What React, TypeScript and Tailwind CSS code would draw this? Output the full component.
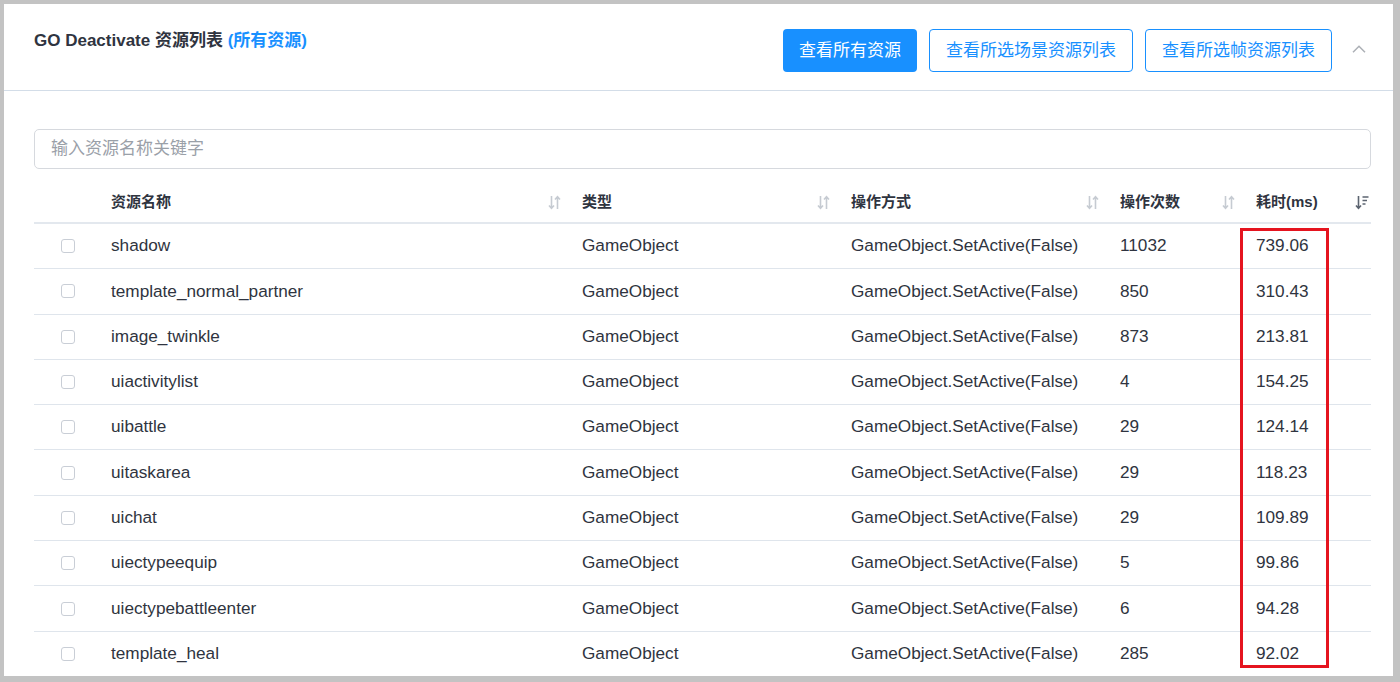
type Row = {
  name: string
  type: string
  op: string
  count: string
  time: string
}

const rows: Row[] = [
  { name: 'shadow', type: 'GameObject', op: 'GameObject.SetActive(False)', count: '11032', time: '739.06' },
  { name: 'template_normal_partner', type: 'GameObject', op: 'GameObject.SetActive(False)', count: '850', time: '310.43' },
  { name: 'image_twinkle', type: 'GameObject', op: 'GameObject.SetActive(False)', count: '873', time: '213.81' },
  { name: 'uiactivitylist', type: 'GameObject', op: 'GameObject.SetActive(False)', count: '4', time: '154.25' },
  { name: 'uibattle', type: 'GameObject', op: 'GameObject.SetActive(False)', count: '29', time: '124.14' },
  { name: 'uitaskarea', type: 'GameObject', op: 'GameObject.SetActive(False)', count: '29', time: '118.23' },
  { name: 'uichat', type: 'GameObject', op: 'GameObject.SetActive(False)', count: '29', time: '109.89' },
  { name: 'uiectypeequip', type: 'GameObject', op: 'GameObject.SetActive(False)', count: '5', time: '99.86' },
  { name: 'uiectypebattleenter', type: 'GameObject', op: 'GameObject.SetActive(False)', count: '6', time: '94.28' },
  { name: 'template_heal', type: 'GameObject', op: 'GameObject.SetActive(False)', count: '285', time: '92.02' },
]

const SortIcon = () => (
  <svg width="13" height="15" viewBox="0 0 13 15" fill="none" stroke="#c6cbd2" strokeWidth="1.6">
    <path d="M3.5 1v12M1 10.5l2.5 2.7 2.5-2.7" />
    <path d="M9.5 14V2M7 4.5l2.5-2.7 2.5 2.7" />
  </svg>
)

const SortDescIcon = () => (
  <svg width="14" height="15" viewBox="0 0 14 15" fill="none" stroke="#5c6470" strokeWidth="1.6">
    <path d="M3.5 1v12M1 10.5l2.5 2.7 2.5-2.7" />
    <path d="M7.5 2h6M7.5 5.5h4.5M7.5 9h3" />
  </svg>
)

function Checkbox() {
  return <span className="block h-[14px] w-[14px] rounded-[3px] border border-[#c9ced6] bg-white" />
}

export default function App() {
  const font = { fontFamily: '"Liberation Sans", "Noto Sans CJK SC", sans-serif' }
  return (
    <div
      className="h-[682px] w-[1400px] overflow-hidden border-b-[6px] border-l-[4px] border-r-[7px] border-t-[4px] border-[#c3c3c3] bg-white text-[#2f3440]"
      style={font}
    >
      {/* header */}
      <div className="flex h-[87px] items-start border-b border-[#d3dde8] pl-[30px] pr-[27px] pt-[25px]">
        <div className="text-[17px] font-bold leading-[24px]">
          GO Deactivate 资源列表 <span className="text-[#1890ff]">(所有资源)</span>
        </div>
        <div className="ml-auto flex items-center gap-3">
          <button className="h-[43px] rounded-[4px] bg-[#1890ff] px-4 text-[17px] text-white">查看所有资源</button>
          <button className="h-[43px] rounded-[4px] border border-[#1890ff] px-4 text-[17px] text-[#1890ff]">
            查看所选场景资源列表
          </button>
          <button className="h-[43px] rounded-[4px] border border-[#1890ff] px-4 text-[17px] text-[#1890ff]">
            查看所选帧资源列表
          </button>
          <svg width="14" height="8" viewBox="0 0 14 8" fill="none" stroke="#acb0b6" strokeWidth="1.5" className="ml-[8px] mb-[4px]">
            <path d="M1 7.2 7 1.2l6 6" />
          </svg>
        </div>
      </div>

      {/* body */}
      <div className="pl-[30px] pr-[22px] pt-[38px]">
        <div className="flex h-[40px] items-center rounded-[5px] border border-[#d6d9de] px-4 text-[17px] text-[#9aa0a8]">
          输入资源名称关键字
        </div>

        <div className="relative mt-[13px]">
          <div className="flex h-[42px] items-center border-b-2 border-[#e3e8ee] text-[15px] font-bold">
            <div className="w-[61px]" />
            <div className="flex w-[471px] items-center justify-between pl-4 pr-[5px]">
              <span>资源名称</span>
              <SortIcon />
            </div>
            <div className="flex w-[269px] items-center justify-between pl-4 pr-[5px]">
              <span>类型</span>
              <SortIcon />
            </div>
            <div className="flex w-[269px] items-center justify-between pl-4 pr-[5px]">
              <span>操作方式</span>
              <SortIcon />
            </div>
            <div className="flex w-[136px] items-center justify-between pl-4 pr-[5px]">
              <span>操作次数</span>
              <SortIcon />
            </div>
            <div className="flex flex-1 items-center justify-between pl-4 pr-[2px]">
              <span>耗时(ms)</span>
              <SortDescIcon />
            </div>
          </div>

          {rows.map((r) => (
            <div key={r.name} className="flex h-[45.3px] items-center border-b border-[#dfe5ec] text-[17.2px]">
              <div className="flex w-[61px] justify-center pl-[7px]">
                <Checkbox />
              </div>
              <div className="w-[471px] pl-4">{r.name}</div>
              <div className="w-[269px] pl-4">{r.type}</div>
              <div className="w-[269px] pl-4">{r.op}</div>
              <div className="w-[136px] pl-4">{r.count}</div>
              <div className="flex-1 pl-4">{r.time}</div>
            </div>
          ))}

          {/* annotation box */}
          <div className="pointer-events-none absolute left-[1206px] top-[46px] h-[440px] w-[89px] border-[3px] border-[#e5141f]" />
        </div>
      </div>
    </div>
  )
}
